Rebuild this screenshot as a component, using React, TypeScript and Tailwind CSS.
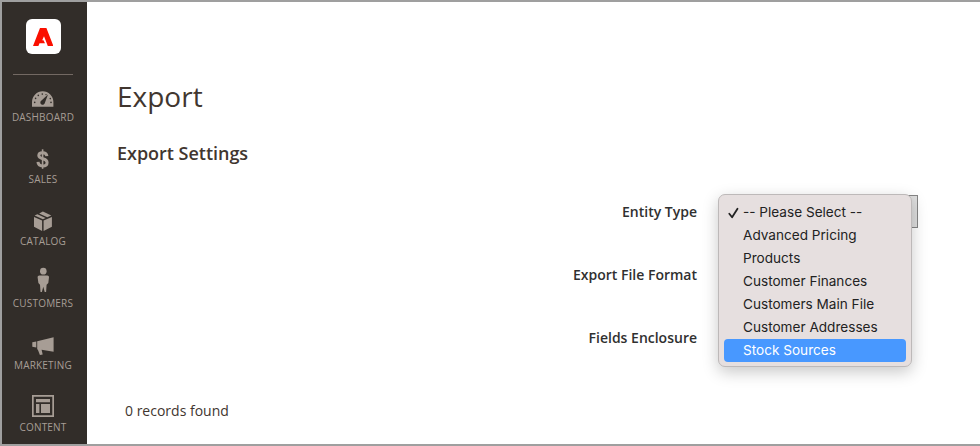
import type { ReactNode } from "react";

const iconClass = "block h-[30px] w-[24px]";

const DashboardIcon = () => (
  <svg viewBox="0 0 24 30" className={iconClass} fill="#a79d95">
    <path d="M1 26.7V22a10.7 10.7 0 0 1 21.4 0v4.7z" />
    <g fill="#322d29">
      <circle cx="3.7" cy="22.4" r=".8" />
      <circle cx="4.6" cy="18.4" r=".8" />
      <circle cx="7.3" cy="15.4" r=".8" />
      <circle cx="11.3" cy="14.1" r=".8" />
      <circle cx="15" cy="14.6" r=".7" />
      <circle cx="19.3" cy="18.6" r=".8" />
      <circle cx="20" cy="22.4" r=".8" />
      <path d="M17 14.6l-3.1 8.2a2.3 2.3 0 1 1-3.7-2.1z" />
    </g>
  </svg>
);

const SalesIcon = () => (
  <svg viewBox="0 0 24 30" className={iconClass} fill="none" stroke="#a79d95">
    <path d="M15.9 14.2c-.2-2.3-1.6-3.4-4.3-3.4-2.4 0-3.8 1-3.8 2.8 0 4.3 8.3 2.1 8.3 6.8 0 2.2-1.7 3.5-4.4 3.5-2.9 0-4.6-1.3-4.7-4" strokeWidth="3" />
    <path d="M11.6 7.3v19.5" strokeWidth="1.6" />
  </svg>
);

const CatalogIcon = () => (
  <svg viewBox="0 0 24 30" className={iconClass} fill="#a79d95">
    <path d="M3 13l8.1 3.6v10.3L3 22.7zM20.9 13l-8.3 3.6v10.3l8.3-4.2z" />
    <path d="M3.6 11.6l2.8-1.4 8.2 3.7-2.7 1.3zM8.1 9.4l3.8-2 8.4 4.1-4 1.8z" />
  </svg>
);

const CustomersIcon = () => (
  <svg viewBox="0 0 24 30" className={iconClass} fill="#a79d95">
    <ellipse cx="12.3" cy="5.2" rx="3.3" ry="3.4" />
    <path d="M8.3 9.4h8c1 0 1.7.8 1.7 1.8l-.7 5.8-1.7 1.7-.5 7.2h-1.4l-1.4-5.1-1.4 5.1H9.5L9 18.7 7.4 17l-.8-5.8c0-1 .7-1.8 1.7-1.8z" />
  </svg>
);

const MarketingIcon = () => (
  <svg viewBox="0 0 24 30" className={iconClass} fill="#a79d95">
    <path d="M6.2 13.2l16.4-3.9v14.5l-12-2.1 1.1 4.7-2.8.7-2.1-5.6-.6-.1z" />
    <path d="M1.3 14.2l4-.8v6.2l-4-.8z" />
  </svg>
);

const ContentIcon = () => (
  <svg viewBox="0 0 24 30" className={iconClass} fill="#a79d95">
    <path fillRule="evenodd" d="M1 5h22v22H1zM2.7 6.7v18.6h18.6V6.7z" />
    <path d="M5 9h14v3.2H5zM5 14h3.4v9H5zM10 14h9v9h-9z" />
  </svg>
);

const navItems: { label: string; icon: ReactNode }[] = [
  { label: "DASHBOARD", icon: <DashboardIcon /> },
  { label: "SALES", icon: <SalesIcon /> },
  { label: "CATALOG", icon: <CatalogIcon /> },
  { label: "CUSTOMERS", icon: <CustomersIcon /> },
  { label: "MARKETING", icon: <MarketingIcon /> },
  { label: "CONTENT", icon: <ContentIcon /> },
];

const options = [
  "-- Please Select --",
  "Advanced Pricing",
  "Products",
  "Customer Finances",
  "Customers Main File",
  "Customer Addresses",
  "Stock Sources",
];

function Sidebar() {
  return (
    <aside className="flex w-[85px] shrink-0 flex-col items-center bg-[#322d29] pr-[3px]">
      <div className="mt-[17px] flex h-[35px] w-[35px] shrink-0 items-center justify-center rounded-[6px] bg-white">
        <svg viewBox="0 0 20 18" className="h-[18px] w-[20px]" fill="#fa0f00">
          <path d="M7 0h6.4L20.4 18h-5.6L11 8.2 9.2 12.2h1.3l1.5 3H6.5L5.4 18H0z" />
        </svg>
      </div>
      <hr className="mt-[20px] w-[60px] shrink-0 border-t border-[#736963]" />
      <nav className="mt-[5px] flex shrink-0 flex-col">
        {navItems.map((item) => (
          <a key={item.label} className="flex h-[62px] flex-col items-center text-[10px] leading-[15px] tracking-[0.2px] text-[#a79d95]">
            {item.icon}
            <span>{item.label}</span>
          </a>
        ))}
      </nav>
    </aside>
  );
}

function OptionMenu() {
  return (
    <ul className="absolute top-[-1px] left-0 flex h-[173px] w-[194px] flex-col rounded-[7px] border border-[#bdb9b9] bg-[#e6dfdf] px-[5px] pt-[6px] font-['Inter','Liberation_Sans',sans-serif] text-[13.6px] leading-[23px] font-normal text-[#222] shadow-[0_5px_16px_rgba(0,0,0,0.22)]">
      {options.map((option, index) => (
        <li
          key={option}
          className={
            index === options.length - 1
              ? "flex h-[23px] items-center rounded-[4px] bg-[#4898ff] text-white"
              : "flex h-[23px] items-center"
          }
        >
          <span className="flex w-[19px] shrink-0 justify-center">
            {index === 0 && (
              <svg viewBox="0 0 12 12" className="h-[12px] w-[12px]" fill="none" stroke="#222" strokeWidth="1.8" strokeLinecap="round" strokeLinejoin="round">
                <path d="M1.3 6.7l2.8 3.6L9.5 1.8" />
              </svg>
            )}
          </span>
          <span className="whitespace-nowrap">{option}</span>
        </li>
      ))}
    </ul>
  );
}

export default function App() {
  return (
    <div className="flex h-[446px] w-[980px] overflow-hidden border-y-2 border-l-2 border-[#9f9f9f] bg-white font-['Open_Sans',sans-serif] text-[#41362f]">
      <Sidebar />
      <main className="flex flex-1 flex-col pl-[30px]">
        <h1 className="mt-[74px] text-[28px] leading-[40px]">Export</h1>
        <h2 className="mt-[24px] text-[18px] leading-[26px] font-semibold tracking-[-0.02px]">Export Settings</h2>
        <form className="mt-[29px] flex flex-col gap-[30px] text-[14px] font-semibold text-[#303030]">
          <div className="flex h-[33px] items-center">
            <label className="w-[580px] text-right">Entity Type</label>
            <div className="relative ml-[21px] h-[33px] w-[200px]">
              <div className="ml-auto h-full w-[100px] border border-[#858585] bg-[#dedede]" />
              <OptionMenu />
            </div>
          </div>
          <div className="flex h-[33px] items-center">
            <label className="w-[580px] text-right">Export File Format</label>
          </div>
          <div className="flex h-[33px] items-center">
            <label className="w-[580px] text-right">Fields Enclosure</label>
          </div>
        </form>
        <p className="mt-[47px] ml-[8px] text-[14px] leading-[20px]">0 records found</p>
      </main>
    </div>
  );
}
